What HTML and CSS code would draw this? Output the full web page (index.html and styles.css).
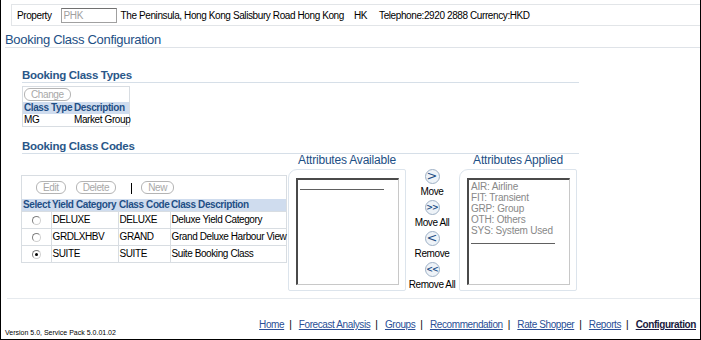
FILE: index.html
```html
<!DOCTYPE html>
<html lang="en">
<head>
    <meta charset="UTF-8">
    <title>Booking Class Configuration</title>
    <link rel="stylesheet" href="styles.css">
</head>
<body>
<div class="page">
    <div class="prop-bar">
        <span class="prop-label">Property</span>
        <span class="prop-input">PHK</span>
        <span>The Peninsula, Hong Kong Salisbury Road Hong Kong</span>
        <span class="prop-country">HK</span>
        <span>Telephone:2920 2888 Currency:HKD</span>
    </div>

    <h1 class="page-title">Booking Class Configuration</h1>

    <div class="section">
        <h2 class="sub-title">Booking Class Types</h2>
        <div class="types-box">
            <div class="btn-row small"><span class="btn">Change</span></div>
            <table class="grid types">
                <tr><th class="c-type">Class Type</th><th>Description</th></tr>
                <tr><td>MG</td><td>Market Group</td></tr>
            </table>
        </div>

        <h2 class="sub-title codes-title">Booking Class Codes</h2>
        <div class="codes-row">
            <div class="codes-panel">
                <div class="btn-row">
                    <span class="btn">Edit</span>
                    <span class="btn">Delete</span>
                    <span class="sep"></span>
                    <span class="btn">New</span>
                </div>
                <table class="grid codes">
                    <tr><th class="c-sel">Select</th><th class="c-yield">Yield Category</th><th class="c-code">Class Code</th><th>Class Description</th></tr>
                    <tr><td class="sel"><span class="radio"></span></td><td>DELUXE</td><td>DELUXE</td><td>Deluxe Yield Category</td></tr>
                    <tr><td class="sel"><span class="radio"></span></td><td>GRDLXHBV</td><td>GRAND</td><td>Grand Deluxe Harbour View</td></tr>
                    <tr><td class="sel"><span class="radio on"></span></td><td>SUITE</td><td>SUITE</td><td>Suite Booking Class</td></tr>
                </table>
            </div>

            <div class="attr-col">
                <div class="attr-title">Attributes Available</div>
                <div class="attr-box">
                    <div class="listbox"><div class="list-line"></div></div>
                </div>
            </div>

            <div class="mover">
                <span class="arrow">&gt;</span><span class="mv-label">Move</span>
                <span class="arrow dbl">&gt;&gt;</span><span class="mv-label">Move All</span>
                <span class="arrow">&lt;</span><span class="mv-label">Remove</span>
                <span class="arrow dbl">&lt;&lt;</span><span class="mv-label">Remove All</span>
            </div>

            <div class="attr-col">
                <div class="attr-title">Attributes Applied</div>
                <div class="attr-box">
                    <div class="listbox">
                        <div class="opt">AIR: Airline</div>
                        <div class="opt">FIT: Transient</div>
                        <div class="opt">GRP: Group</div>
                        <div class="opt">OTH: Others</div>
                        <div class="opt">SYS: System Used</div>
                        <div class="list-line"></div>
                    </div>
                </div>
            </div>
        </div>
    </div>

    <div class="footer-rule"></div>
    <div class="footer">
        <div class="version">Version 5.0, Service Pack 5.0.01.02</div>
        <div class="nav">
            <a href="#">Home</a><span class="bar">|</span>
            <a href="#">Forecast Analysis</a><span class="bar">|</span>
            <a href="#">Groups</a><span class="bar">|</span>
            <a href="#">Recommendation</a><span class="bar">|</span>
            <a href="#">Rate Shopper</a><span class="bar">|</span>
            <a href="#">Reports</a><span class="bar">|</span>
            <a href="#" class="current">Configuration</a>
        </div>
    </div>
</div>
</body>
</html>
```

FILE: styles.css
```css
body {
    margin: 0;
    font-family: "Liberation Sans", Arial, sans-serif;
    font-size: 10px;
    letter-spacing: -0.4px;
    color: #000;
    background: #fff;
}
.page {
    width: 701px;
    height: 340px;
    box-sizing: border-box;
    border: 1px solid #000;
    border-top: none;
    display: flex;
    flex-direction: column;
}
.prop-bar {
    margin: 4px 0 0 10px;
    height: 20px;
    border: 1px solid #e2e5e8;
    border-right: none;
    display: flex;
    align-items: center;
    padding-left: 5px;
    white-space: nowrap;
}
.prop-label {
    margin-right: 9px;
}
.prop-input {
    width: 52px;
    height: 13px;
    line-height: 13px;
    border: 1px solid #a0a0a0;
    border-top-color: #707070;
    color: #a0a0a0;
    padding-left: 2px;
    margin-right: 4px;
}
.prop-country {
    margin: 0 12px 0 10px;
}
.page-title {
    margin: 6px 0 0 4px;
    font-size: 13px;
    line-height: 15px;
    letter-spacing: -0.3px;
    font-weight: normal;
    color: #1d4f85;
    border-bottom: 1px solid #dfe3e8;
}
.section {
    margin-left: 21px;
}
.sub-title {
    width: 557px;
    margin: 21px 0 0;
    font-size: 11.5px;
    letter-spacing: -0.3px;
    font-weight: bold;
    color: #2a5789;
    border-bottom: 1px solid #d6dfe8;
    line-height: 13px;
}
.codes-title {
    margin-top: 13px;
}
.types-box {
    margin-top: 3px;
    width: 108px;
    box-sizing: border-box;
    border: 1px solid #d8dde2;
}
.btn-row {
    display: flex;
    align-items: center;
    gap: 10px;
    padding: 5px 0 5px 14px;
}
.btn-row.small {
    padding: 1px 0 1px 1px;
}
.btn {
    border: 1px solid #b4b4b4;
    border-radius: 6px;
    color: #a8a8a8;
    padding: 0 6px;
    height: 11px;
    line-height: 11px;
}
.sep {
    width: 0;
    height: 11px;
    margin: 2px -1px 0 5px;
    border-left: 1px solid #000;
}
.grid {
    border-collapse: collapse;
    width: 100%;
    table-layout: fixed;
}
.grid th {
    background: #cfdcee;
    color: #1f4f86;
    font-weight: bold;
    text-align: left;
    padding: 0 1px;
    height: 12px;
    line-height: 12px;
    white-space: nowrap;
    overflow: hidden;
}
.grid td {
    padding: 0 1px;
    height: 12px;
    line-height: 12px;
    white-space: nowrap;
}
.types .c-type {
    width: 48px;
}
.codes-row {
    display: flex;
    align-items: flex-start;
    margin-left: -1px;
}
.codes-panel {
    margin-top: 21px;
    width: 266px;
    border: 1px solid #d8dde2;
    box-sizing: border-box;
}
.codes .c-sel {
    width: 27px;
}
.codes .c-yield {
    width: 65px;
}
.codes .c-code {
    width: 50px;
}
.codes td {
    height: 16px;
    line-height: 16px;
    border-top: 1px solid #d8dde2;
    border-right: 1px solid #d8dde2;
}
.codes td:last-child {
    border-right: none;
}
.codes td.sel {
    text-align: center;
}
.radio {
    display: inline-block;
    width: 7px;
    height: 7px;
    border: 1px solid #808080;
    border-right-color: #d0d0d0;
    border-bottom-color: #d0d0d0;
    border-radius: 50%;
    vertical-align: middle;
    position: relative;
}
.radio.on::after {
    content: "";
    position: absolute;
    left: 2px;
    top: 2px;
    width: 3px;
    height: 3px;
    border-radius: 50%;
    background: #000;
}
.attr-col {
    display: flex;
    flex-direction: column;
    align-items: center;
    margin-left: 1px;
}
.attr-title {
    font-size: 12px;
    letter-spacing: -0.2px;
    color: #1d4f85;
    line-height: 13px;
}
.attr-box {
    margin-top: 2px;
    width: 118px;
    height: 122px;
    box-sizing: border-box;
    border: 1px solid #dce4ec;
    border-radius: 9px 2px 2px 2px;
    padding: 8px 0 0 7px;
}
.listbox {
    width: 103px;
    height: 107px;
    box-sizing: border-box;
    border: 2px solid #4a4a4a;
    border-right: 1px solid #c8c8c8;
    border-bottom: 1px solid #c8c8c8;
    padding: 1px 2px;
}
.list-line {
    margin-top: 8px;
    width: 84px;
    border-top: 1px solid #606060;
}
.opt {
    color: #888;
    line-height: 11px;
    letter-spacing: -0.2px;
}
.opt + .list-line {
    margin-top: 7px;
}
.mover {
    width: 52px;
    display: flex;
    flex-direction: column;
    align-items: center;
    margin-top: 15px;
}
.arrow {
    width: 15px;
    height: 15px;
    box-sizing: border-box;
    border: 1px solid #9fb1c6;
    border-radius: 50%;
    background: #eef3f8;
    color: #1f4f86;
    font-family: "DejaVu Sans", sans-serif;
    font-size: 13px;
    letter-spacing: 0;
    line-height: 12px;
    text-align: center;
}
.arrow.dbl {
    font-size: 8px;
    line-height: 13px;
    letter-spacing: -1px;
    font-weight: bold;
}
.mv-label {
    line-height: 12px;
    margin: 2px 0 2px;
    white-space: nowrap;
}
.footer-rule {
    margin: 5px 0 0 6px;
    border-top: 1px solid #e6eaee;
}
.footer {
    margin-top: auto;
    display: flex;
    justify-content: space-between;
    align-items: flex-end;
    padding: 0 4px 2px 4px;
}
.version {
    font-size: 7px;
    letter-spacing: 0;
    line-height: 9px;
}
.nav {
    padding-bottom: 7px;
    white-space: nowrap;
}
.nav a {
    color: #2a4f96;
}
.nav a.current {
    color: #1a1a40;
    font-weight: bold;
}
.bar {
    margin: 0 5px;
}
```
